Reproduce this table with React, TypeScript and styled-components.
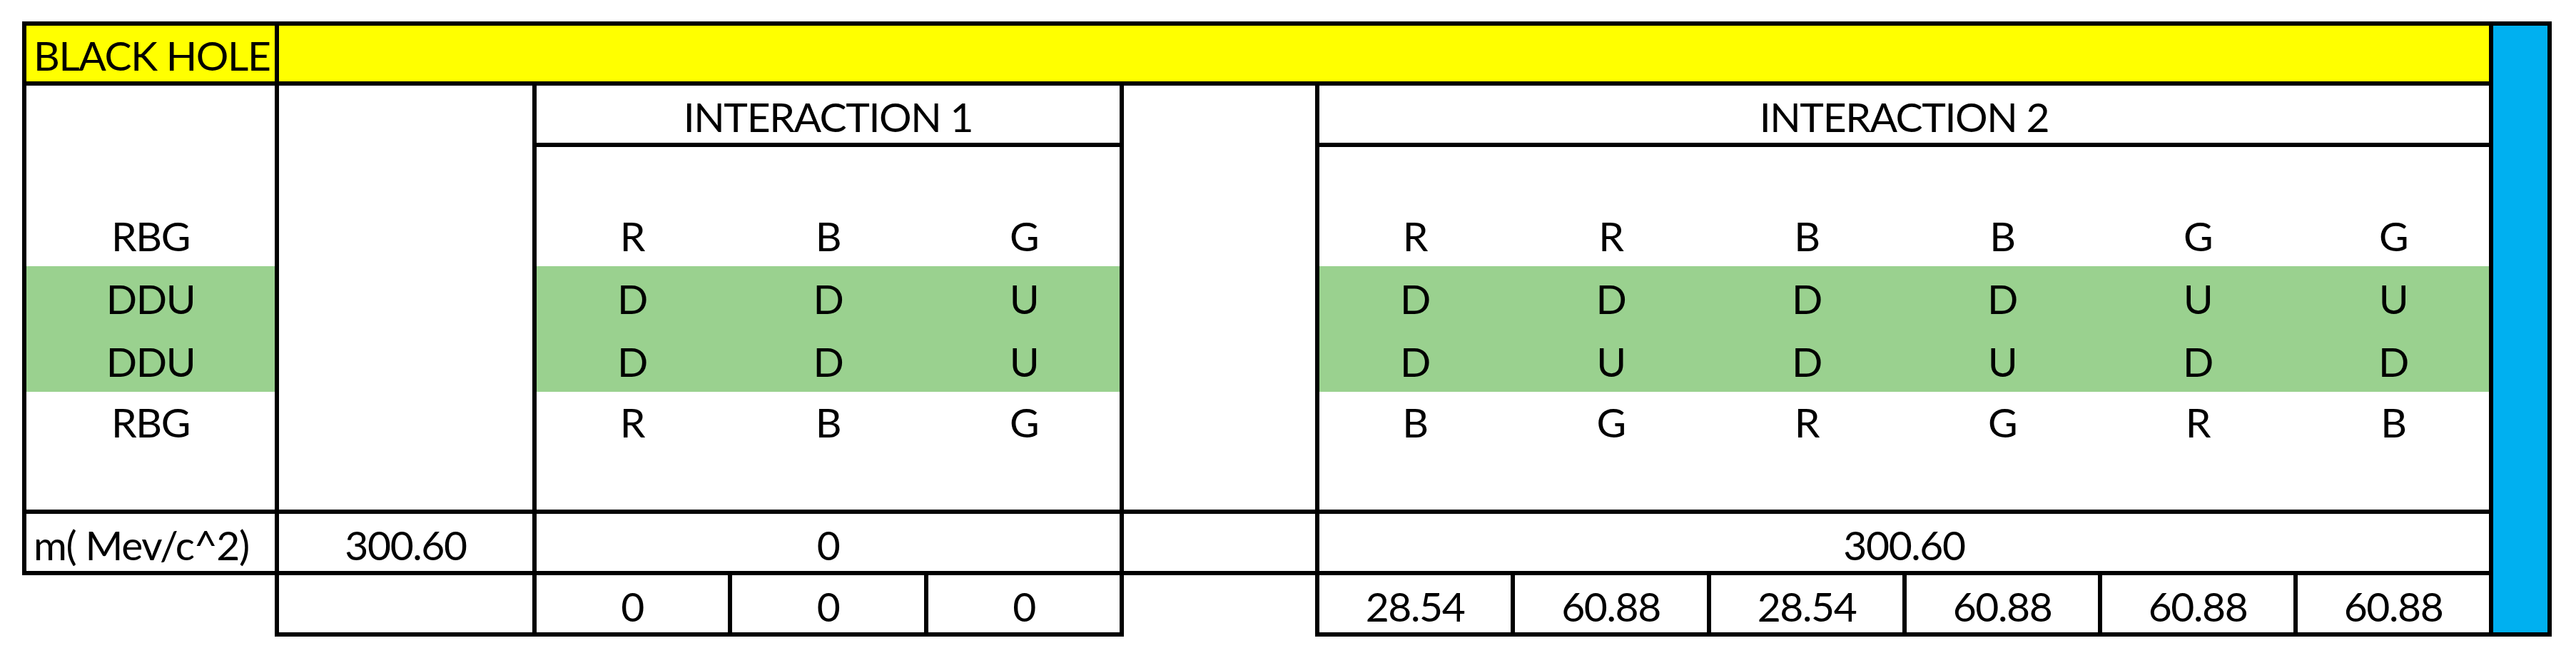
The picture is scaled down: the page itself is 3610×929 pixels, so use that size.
import React from "react";
import styled, { createGlobalStyle } from "styled-components";

const GlobalStyle = createGlobalStyle`
  html, body {
    margin: 0;
    padding: 0;
    background: #ffffff;
  }
  body {
    font-family: Lato, "Open Sans", "Liberation Sans", sans-serif;
    color: #000000;
  }
`;

const Page = styled.div`
  padding: 30px 0 0 31px;
`;

const Sheet = styled.div`
  display: grid;
  grid-template-columns: 360px 361px 274px 275px 274px 274px 274px 275px 274px 274px 274px 274px 82px;
  grid-template-rows: 90px 86px 82px 85px 88px 88px 85px 86px 86px 86px;
  width: max-content;
`;

type CellProps = {
  $col: string;
  $row: string;
  $top?: boolean;
  $left?: boolean;
  $right?: boolean;
  $bottom?: boolean;
  $bg?: string;
  $start?: boolean;
};

const LINE = 6;

const Cell = styled.div<CellProps>`
  grid-column: ${(p) => p.$col};
  grid-row: ${(p) => p.$row};
  box-sizing: border-box;
  display: flex;
  align-items: flex-end;
  justify-content: ${(p) => (p.$start ? "flex-start" : "center")};
  background: ${(p) => p.$bg ?? "transparent"};
  border: 0 solid #000000;
  border-top-width: ${(p) => (p.$top ? LINE : 0)}px;
  border-left-width: ${(p) => (p.$left ? LINE : 0)}px;
  border-right-width: ${(p) => (p.$right ? LINE : 0)}px;
  border-bottom-width: ${(p) => (p.$bottom ? LINE : 0)}px;
  padding-top: 0;
  padding-left: ${(p) => (p.$start ? 10 : 0)}px;
  padding-right: ${(p) => (p.$right ? 0 : LINE)}px;
  padding-bottom: ${(p) => (p.$bottom ? 8 : 8 + LINE)}px;
  font-size: 57px;
  line-height: 57px;
  letter-spacing: -1.4px;
  white-space: nowrap;
  overflow: hidden;
`;

const YELLOW = "#ffff00";
const GREEN = "#9ad18f";
const BLUE = "#00b0f0";

const quarkRows = [
  { label: "RBG", i1: ["R", "B", "G"], i2: ["R", "R", "B", "B", "G", "G"], green: false },
  { label: "DDU", i1: ["D", "D", "U"], i2: ["D", "D", "D", "D", "U", "U"], green: true },
  { label: "DDU", i1: ["D", "D", "U"], i2: ["D", "U", "D", "U", "D", "D"], green: true },
  { label: "RBG", i1: ["R", "B", "G"], i2: ["B", "G", "R", "G", "R", "B"], green: false },
];

const interaction1Values = ["0", "0", "0"];
const interaction2Values = ["28.54", "60.88", "28.54", "60.88", "60.88", "60.88"];

export default function App() {
  return (
    <Page>
      <GlobalStyle />
      <Sheet>
        {/* Row 1: title band */}
        <Cell $col="1" $row="1" $top $left $right $bottom $bg={YELLOW} $start>
          BLACK HOLE
        </Cell>
        <Cell $col="2 / 13" $row="1" $top $right $bottom $bg={YELLOW} />
        <Cell $col="13" $row="1 / 11" $top $right $bottom $bg={BLUE} />

        {/* Rows 2-3: headers */}
        <Cell $col="1" $row="2 / 4" $left $right />
        <Cell $col="2" $row="2 / 9" $right $bottom />
        <Cell $col="3 / 6" $row="2" $right $bottom>
          INTERACTION 1
        </Cell>
        <Cell $col="6" $row="2 / 9" $right $bottom />
        <Cell $col="7 / 13" $row="2" $right $bottom>
          INTERACTION 2
        </Cell>
        <Cell $col="3 / 6" $row="3" $right />
        <Cell $col="7 / 13" $row="3" $right />

        {/* Rows 4-7: quark content */}
        {quarkRows.map((r, i) => {
          const row = String(4 + i);
          const bg = r.green ? GREEN : undefined;
          return (
            <React.Fragment key={row}>
              <Cell $col="1" $row={row} $left $right $bg={bg}>
                {r.label}
              </Cell>
              {r.i1.map((q, j) => (
                <Cell
                  key={`a${j}`}
                  $col={String(3 + j)}
                  $row={row}
                  $right={j === r.i1.length - 1}
                  $bg={bg}
                >
                  {q}
                </Cell>
              ))}
              {r.i2.map((q, j) => (
                <Cell
                  key={`b${j}`}
                  $col={String(7 + j)}
                  $row={row}
                  $right={j === r.i2.length - 1}
                  $bg={bg}
                >
                  {q}
                </Cell>
              ))}
            </React.Fragment>
          );
        })}

        {/* Row 8: blank closing row */}
        <Cell $col="1" $row="8" $left $right $bottom />
        <Cell $col="3 / 6" $row="8" $right $bottom />
        <Cell $col="7 / 13" $row="8" $right $bottom />

        {/* Row 9: mass */}
        <Cell $col="1" $row="9" $left $right $bottom $start>
          m( Mev/c^2)
        </Cell>
        <Cell $col="2" $row="9" $right $bottom>
          300.60
        </Cell>
        <Cell $col="3 / 6" $row="9" $right $bottom>
          0
        </Cell>
        <Cell $col="6" $row="9" $right $bottom />
        <Cell $col="7 / 13" $row="9" $right $bottom>
          300.60
        </Cell>

        {/* Row 10: per-column values */}
        <Cell $col="1" $row="10" $right />
        <Cell $col="2" $row="10" $right $bottom />
        {interaction1Values.map((v, j) => (
          <Cell key={`v1${j}`} $col={String(3 + j)} $row="10" $right $bottom>
            {v}
          </Cell>
        ))}
        <Cell $col="6" $row="10" $right />
        {interaction2Values.map((v, j) => (
          <Cell key={`v2${j}`} $col={String(7 + j)} $row="10" $right $bottom>
            {v}
          </Cell>
        ))}
      </Sheet>
    </Page>
  );
}
